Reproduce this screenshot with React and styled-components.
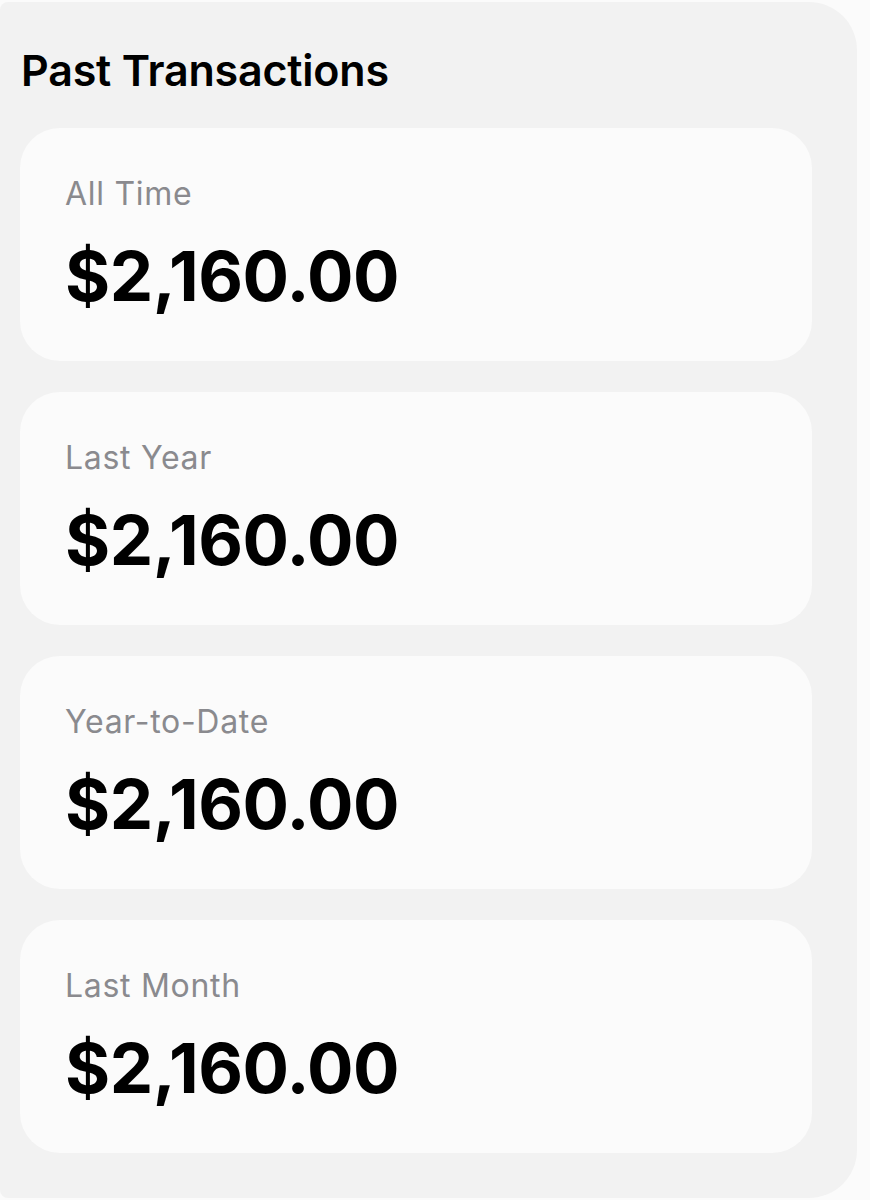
import React from "react";
import styled, { createGlobalStyle } from "styled-components";

const Global = createGlobalStyle`
  html, body { margin: 0; padding: 0; background: #fbfbfb; }
  body { font-family: Inter, "Noto Sans", sans-serif; -webkit-font-smoothing: antialiased; }
`;

const Panel = styled.section`
  box-sizing: border-box;
  width: 857px;
  height: 1196px;
  margin-top: 2px;
  background: #f2f2f2;
  border-radius: 8px 48px 48px 8px;
  padding: 42px 45px 0 20px;
  display: flex;
  flex-direction: column;
`;

const Title = styled.h2`
  margin: 0 0 0 1px;
  font-size: 43px;
  line-height: 52px;
  font-weight: 600;
  color: #000;
  letter-spacing: -0.2px;
`;

const List = styled.div`
  margin-top: 32px;
  display: flex;
  flex-direction: column;
  gap: 31px;
`;

const Card = styled.div`
  box-sizing: border-box;
  height: 233px;
  background: #fbfbfb;
  border-radius: 40px;
  padding: 48px 45px 0 45px;
  display: flex;
  flex-direction: column;
`;

const Label = styled.div`
  font-size: 32px;
  line-height: 36px;
  font-weight: 400;
  color: #8a8a8e;
  letter-spacing: 0.7px;
`;

const Amount = styled.div`
  margin-top: 24px;
  font-size: 69px;
  line-height: 80px;
  font-weight: 700;
  color: #000;
  letter-spacing: -0.5px;
`;

const rows = ["All Time", "Last Year", "Year-to-Date", "Last Month"];

export default function App() {
  return (
    <>
      <Global />
      <Panel>
        <Title>Past Transactions</Title>
        <List>
          {rows.map((r) => (
            <Card key={r}>
              <Label>{r}</Label>
              <Amount>$2,160.00</Amount>
            </Card>
          ))}
        </List>
      </Panel>
    </>
  );
}
